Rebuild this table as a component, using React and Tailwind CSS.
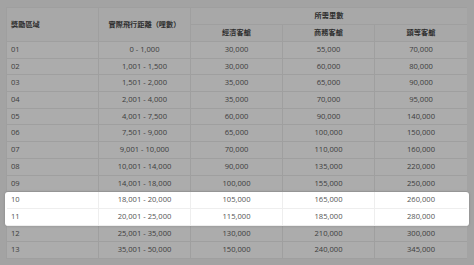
import React from 'react';

/* ─── Data ──────────────────────────────────────────────────── */
const ROWS = [
  ['01', '0 - 1,000', '30,000', '55,000', '70,000'],
  ['02', '1,001 - 1,500', '30,000', '60,000', '80,000'],
  ['03', '1,501 - 2,000', '35,000', '65,000', '90,000'],
  ['04', '2,001 - 4,000', '35,000', '70,000', '95,000'],
  ['05', '4,001 - 7,500', '60,000', '90,000', '140,000'],
  ['06', '7,501 - 9,000', '65,000', '100,000', '150,000'],
  ['07', '9,001 - 10,000', '70,000', '110,000', '160,000'],
  ['08', '10,001 - 14,000', '90,000', '135,000', '220,000'],
  ['09', '14,001 - 18,000', '100,000', '155,000', '250,000'],
  ['10', '18,001 - 20,000', '105,000', '165,000', '260,000'],
  ['11', '20,001 - 25,000', '115,000', '185,000', '280,000'],
  ['12', '25,001 - 35,000', '130,000', '210,000', '300,000'],
  ['13', '35,001 - 50,000', '150,000', '240,000', '345,000'],
];

/* ─── Row ───────────────────────────────────────────────────── */
const Row = ({ cells, lit }) => (
  <div className="grid grid-cols-5 h-[16.7px]">
    {cells.map((c, i) => (
      <div
        key={i}
        className={`flex items-center border-b ${i < 4 ? 'border-r' : ''} ${
          lit ? 'border-[#eeeeee] text-[#555555]' : 'border-[#9f9f9f] text-[#3d3d3d]'
        } ${i === 0 ? 'justify-start pl-[4px]' : 'justify-center'}`}
      >
        {c}
      </div>
    ))}
  </div>
);

export default function App() {
  const before = ROWS.slice(0, 9);
  const lit = ROWS.slice(9, 11);
  const after = ROWS.slice(11);

  return (
    <div className="w-[474px] h-[265px] bg-[#a3a3a3] pt-[7px] pl-[6px] pr-[7px] overflow-hidden font-['Open_Sans','Noto_Sans_CJK_TC',sans-serif] text-[7.6px] leading-none">
      <div className="bg-[#acacac] border-l border-t border-[#9f9f9f]">

        {/* Header */}
        <div className="grid grid-cols-5 grid-rows-[17px_17px] bg-[#a8a8a8] font-bold text-[#2e2e2e] text-[7.2px]">
          <div className="row-span-2 flex items-center pl-[4px] border-r border-b border-[#9f9f9f]">獎勵區域</div>
          <div className="row-span-2 flex items-center justify-center border-r border-b border-[#9f9f9f]">實際飛行距離（哩數）</div>
          <div className="col-span-3 flex items-center justify-center border-b border-[#9f9f9f]">所需里數</div>
          <div className="flex items-center justify-center border-r border-b border-[#9f9f9f]">經濟客艙</div>
          <div className="flex items-center justify-center border-r border-b border-[#9f9f9f]">商務客艙</div>
          <div className="flex items-center justify-center border-b border-[#9f9f9f]">頭等客艙</div>
        </div>

        {/* Body */}
        {before.map(r => <Row key={r[0]} cells={r} />)}
        <div className="relative -ml-[2px] -mr-[2px] pl-[2px] pr-[2px] bg-white rounded-[3px] shadow-[0_0_3px_rgba(0,0,0,0.18)]">
          {lit.map(r => <Row key={r[0]} cells={r} lit />)}
        </div>
        {after.map(r => <Row key={r[0]} cells={r} />)}
      </div>
    </div>
  );
}
